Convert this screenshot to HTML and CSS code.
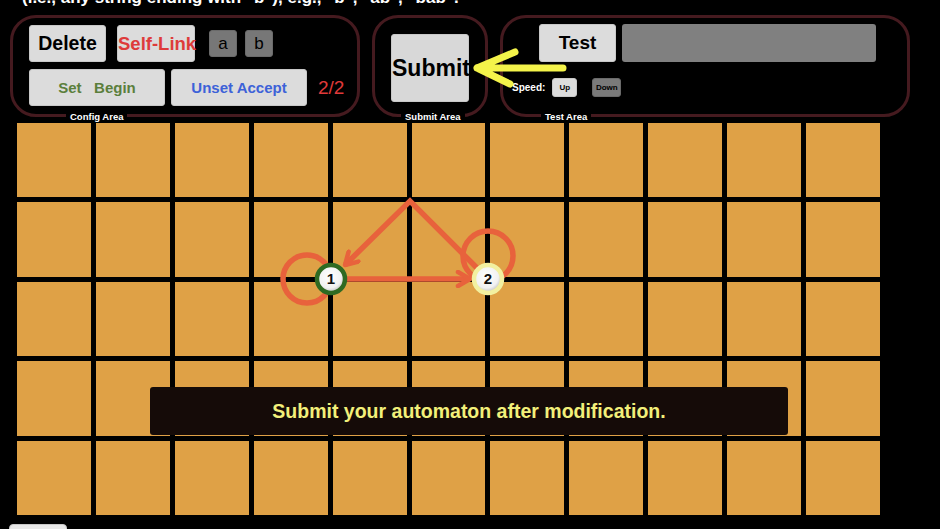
FILE: index.html
```html
<!DOCTYPE html>
<html lang="en">
<head>
    <meta charset="UTF-8">
    <title>Automaton Builder</title>
    <link rel="stylesheet" href="styles.css">
</head>
<body>
    <div class="page">
        <p class="prompt">(i.e., any string ending with "b"), e.g., "b", "ab", "bab".</p>

        <div class="toolbar">
            <div class="area config-area">
                <div class="row">
                    <button class="btn btn-delete">Delete</button>
                    <button class="btn btn-selflink">Self-Link</button>
                    <button class="btn btn-symbol">a</button>
                    <button class="btn btn-symbol">b</button>
                </div>
                <div class="row row-second">
                    <button class="btn btn-wide btn-begin">Set &nbsp; Begin</button>
                    <button class="btn btn-wide btn-accept">Unset Accept</button>
                    <span class="counter">2/2</span>
                </div>
                <span class="area-label">Config Area</span>
            </div>

            <div class="area submit-area">
                <button class="btn btn-submit">Submit</button>
                <span class="area-label">Submit Area</span>
            </div>

            <div class="area test-area">
                <div class="row test-row">
                    <button class="btn btn-test">Test</button>
                    <div class="test-input"></div>
                </div>
                <div class="row speed-row">
                    <span class="speed-label">Speed:</span>
                    <button class="btn btn-speed">Up</button>
                    <button class="btn btn-speed btn-down">Down</button>
                </div>
                <span class="area-label">Test Area</span>
            </div>

            <!-- hint arrow pointing at submit -->
            <svg class="hint-arrow" width="100" height="50" viewBox="0 0 100 50">
                <path d="M7 24 L93 24 M7 24 L45 8 M7 24 L40 40" fill="none" stroke="#f4f34a" stroke-width="7" stroke-linecap="round" stroke-linejoin="round"/>
            </svg>
        </div>

        <div class="board">
            <div class="grid" id="grid"></div>

            <svg class="graph" width="863" height="392" viewBox="0 0 863 392">
                <defs>
                    <marker id="head" viewBox="0 0 18 18" refX="15" refY="9" markerWidth="18" markerHeight="18" markerUnits="userSpaceOnUse" orient="auto">
                        <path d="M3 2 L15 9 L3 16" fill="none" stroke="#e8623c" stroke-width="4.5" stroke-linecap="round" stroke-linejoin="round"/>
                    </marker>
                    <radialGradient id="nodeFill" cx="45%" cy="40%" r="60%">
                        <stop offset="0%" stop-color="#ffffff"/>
                        <stop offset="70%" stop-color="#f1f1f1"/>
                        <stop offset="100%" stop-color="#b9b9b9"/>
                    </radialGradient>
                </defs>
                <circle cx="290" cy="156" r="24" class="edge"/>
                <circle cx="471" cy="133" r="25" class="edge"/>
                <path d="M330 156 L453 156" class="edge" marker-end="url(#head)"/>
                <path d="M460 145 L393 78 L328 142" class="edge" marker-end="url(#head)"/>
                <g class="node">
                    <circle cx="314" cy="156" r="14" fill="url(#nodeFill)" stroke="#2f6a22" stroke-width="4.5"/>
                    <text x="314" y="161">1</text>
                </g>
                <g class="node">
                    <circle cx="471" cy="156" r="14" fill="url(#nodeFill)" stroke="#f2f0a0" stroke-width="4.5"/>
                    <text x="471" y="161">2</text>
                </g>
            </svg>

            <div class="toast">Submit your automaton after modification.</div>
        </div>

        <button class="btn btn-bottom"></button>
    </div>

    <script>
        const grid = document.getElementById('grid');
        grid.innerHTML = Array.from({ length: 55 }, () => '<div class="cell"></div>').join('');
    </script>
</body>
</html>
```

FILE: styles.css
```css
* {
    margin: 0;
    padding: 0;
    box-sizing: border-box;
}

body {
    background: #000;
    font-family: "Liberation Sans", Arial, sans-serif;
    overflow: hidden;
}

.page {
    position: relative;
    padding-left: 10px;
}

.prompt {
    margin-top: -11px;
    padding-left: 12px;
    height: 18px;
    color: #fff;
    font-size: 17px;
    font-weight: 700;
    line-height: 18px;
    white-space: nowrap;
}

.toolbar {
    position: relative;
    display: flex;
    gap: 12px;
    margin-top: 8px;
    height: 102px;
}

.area {
    position: relative;
    border: 3px solid #451a1f;
    border-radius: 26px;
}

.area-label {
    position: absolute;
    bottom: -9px;
    padding: 1px 4px;
    background: #000;
    color: #fff;
    font-size: 9.5px;
    font-weight: 700;
    white-space: nowrap;
}

.row {
    display: flex;
    align-items: center;
}

.btn {
    border: 1px solid #c8c8c8;
    border-radius: 3px;
    background: #dcdcdc;
    font-family: inherit;
    font-weight: 700;
    color: #000;
    cursor: pointer;
}

/* config */
.config-area {
    width: 350px;
    padding: 7px 0 0 16px;
}

.config-area .area-label {
    left: 53px;
}

.btn-delete {
    width: 77px;
    height: 37px;
    font-size: 19.5px;
}

.btn-selflink {
    width: 78px;
    height: 37px;
    margin-left: 11px;
    padding: 0;
    font-size: 18.5px;
    color: #de3b3b;
    white-space: nowrap;
}

.btn-symbol {
    width: 28px;
    height: 27px;
    margin-left: 14px;
    background: #777;
    border-color: #6a6a6a;
    font-size: 17px;
    font-weight: 400;
}

.btn-symbol + .btn-symbol {
    margin-left: 8px;
}

.row-second {
    margin-top: 7px;
}

.btn-wide {
    width: 136px;
    height: 37px;
    font-size: 15px;
}

.btn-begin {
    color: #5b7f3c;
}

.btn-accept {
    margin-left: 6px;
    color: #3d62d8;
}

.counter {
    margin-left: 11px;
    color: #e03a3a;
    font-size: 19px;
}

/* submit */
.submit-area {
    width: 116px;
    padding: 16px 0 0 16px;
}

.submit-area .area-label {
    left: 26px;
}

.btn-submit {
    width: 78px;
    height: 68px;
    padding: 0;
    font-size: 23px;
    background: #d8d8d8;
    overflow: visible;
    white-space: nowrap;
}

/* test */
.test-area {
    width: 410px;
    padding: 6px 0 0 9px;
}

.test-area .area-label {
    left: 38px;
}

.test-row {
    padding-left: 27px;
}

.btn-test {
    width: 77px;
    height: 38px;
    font-size: 19px;
}

.test-input {
    width: 254px;
    height: 38px;
    margin-left: 6px;
    border-radius: 3px;
    background: #808080;
}

.speed-row {
    margin-top: 16px;
}

.speed-label {
    color: #fff;
    font-size: 10px;
    font-weight: 700;
}

.btn-speed {
    width: 25px;
    height: 19px;
    margin-left: 7px;
    padding: 0;
    font-size: 8px;
}

.btn-down {
    width: 29px;
    margin-left: 15px;
    background: #7a7a7a;
    border-color: #6a6a6a;
}

.hint-arrow {
    position: absolute;
    left: 460px;
    top: 29px;
}

/* board */
.board {
    position: relative;
    width: 863px;
    height: 392px;
    margin: 6px 0 0 7px;
}

.grid {
    display: grid;
    grid-template-columns: repeat(11, 1fr);
    grid-template-rows: repeat(5, 1fr);
    gap: 5px;
    height: 100%;
}

.cell {
    background: #dfa146;
}

.graph {
    position: absolute;
    left: 0;
    top: 0;
}

.edge {
    fill: none;
    stroke: #e8623c;
    stroke-width: 5.5px;
}

.node text {
    font-family: "Liberation Sans", Arial, sans-serif;
    font-size: 15px;
    font-weight: 700;
    text-anchor: middle;
    fill: #111;
}

.toast {
    position: absolute;
    left: 133px;
    top: 264px;
    width: 638px;
    height: 48px;
    display: flex;
    align-items: center;
    justify-content: center;
    border-radius: 3px;
    background: #150b08;
    color: #f2f07a;
    font-size: 19.5px;
    font-weight: 700;
}

.btn-bottom {
    display: block;
    width: 58px;
    height: 20px;
    margin: 9px 0 0 -1px;
    background: #e8e8e8;
    border-radius: 4px;
}
```
